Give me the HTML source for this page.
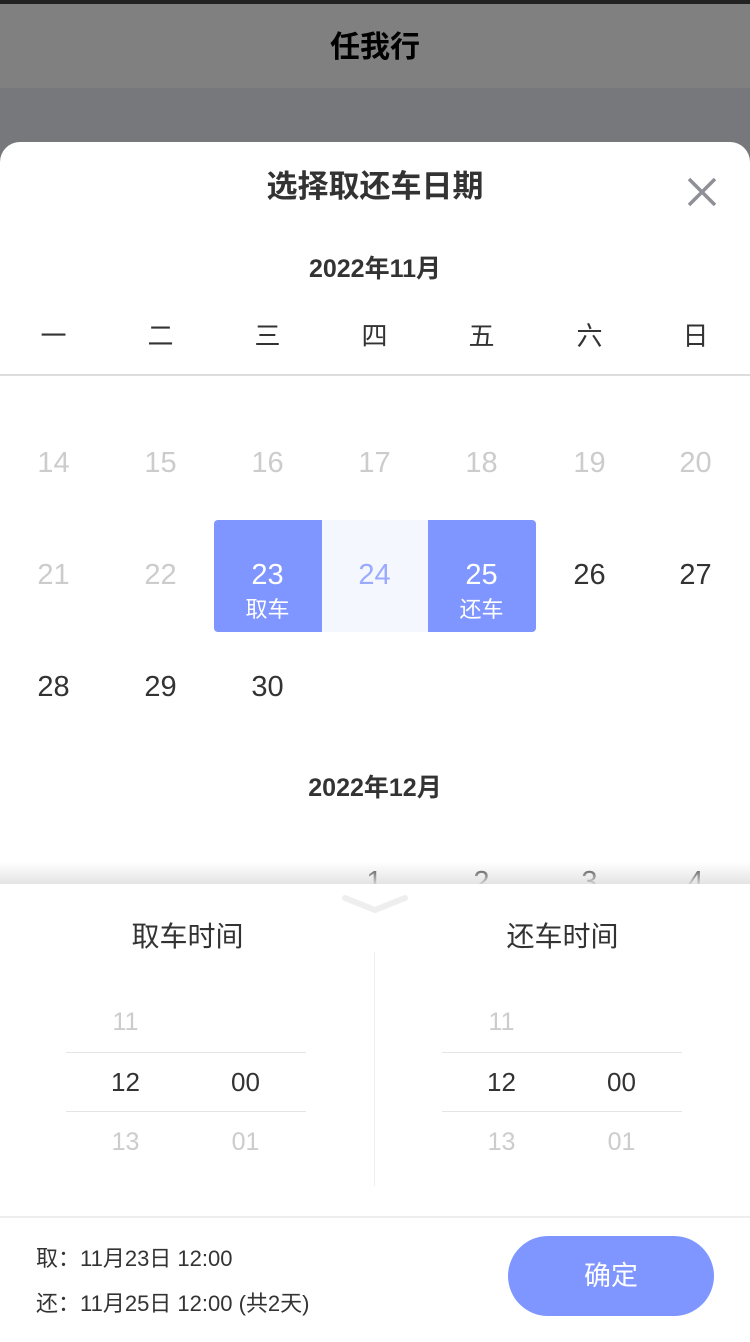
<!DOCTYPE html>
<html><head><meta charset="utf-8"><style>
*{margin:0;padding:0;box-sizing:border-box}
body{width:750px;height:1334px;overflow:hidden;position:relative;background:#fff;font-family:"Liberation Sans","Noto Sans CJK SC",sans-serif;color:#333}
.a{position:absolute}
.c{text-align:center}
.row span{position:absolute;width:107px;text-align:center;font-size:29px}
</style></head><body>
<div class="a" style="left:0;top:0;width:750px;height:4px;background:#222"></div>
<div class="a" style="left:0;top:4px;width:750px;height:84px;background:#808080"></div>
<div class="a" style="left:0;top:88px;width:750px;height:80px;background:#77787b"></div>
<div class="a c" style="left:0;top:22px;width:750px;font-size:30px;font-weight:bold;color:#000">任我行</div>
<div class="a" style="left:0;top:142px;width:750px;height:1200px;background:#fff;border-radius:20px 20px 0 0"></div>
<div class="a c" style="left:0;top:161px;width:750px;font-size:31px;font-weight:bold;color:#333">选择取还车日期</div>
<svg class="a" style="left:686px;top:176px" width="32" height="32"><path d="M3 3L29 29M29 3L3 29" stroke="#8e9096" stroke-width="3.5"/></svg>
<div class="a c" style="left:0;top:249px;width:750px;font-size:25px;font-weight:bold">2022年11月</div>
<div class="a row" style="left:0;top:316px;width:750px">
<span style="left:0;font-size:26px">一</span><span style="left:107px;font-size:26px">二</span><span style="left:214px;font-size:26px">三</span><span style="left:321px;font-size:26px">四</span><span style="left:428px;font-size:26px">五</span><span style="left:536px;font-size:26px">六</span><span style="left:642px;font-size:26px">日</span></div>
<div class="a" style="left:0;top:374px;width:750px;height:2px;background:#ddd"></div>
<div class="a row" style="top:447px;color:#ccc"><span style="left:0">14</span><span style="left:107px">15</span><span style="left:214px">16</span><span style="left:321px">17</span><span style="left:428px">18</span><span style="left:536px">19</span><span style="left:642px">20</span></div>
<div class="a" style="left:214px;top:520px;width:108px;height:112px;background:#7f95ff;border-radius:4px 0 0 4px"></div>
<div class="a" style="left:322px;top:520px;width:106px;height:112px;background:#f5f7ff"></div>
<div class="a" style="left:428px;top:520px;width:108px;height:112px;background:#7f95ff;border-radius:0 4px 4px 0"></div>
<div class="a row" style="top:559px;color:#ccc"><span style="left:0">21</span><span style="left:107px">22</span><span style="left:214px;color:#fff">23</span><span style="left:321px;color:#9aabff">24</span><span style="left:428px;color:#fff">25</span><span style="left:536px;color:#333">26</span><span style="left:642px;color:#333">27</span></div>
<div class="a row" style="top:592px;color:#fff"><span style="left:214px;font-size:22px">取车</span><span style="left:428px;font-size:22px">还车</span></div>
<div class="a row" style="top:671px"><span style="left:0">28</span><span style="left:107px">29</span><span style="left:214px">30</span></div>
<div class="a c" style="left:0;top:768px;width:750px;font-size:25px;font-weight:bold">2022年12月</div>
<div class="a row" style="top:866px"><span style="left:321px">1</span><span style="left:428px">2</span><span style="left:536px">3</span><span style="left:642px">4</span></div>
<div class="a" style="left:0;top:862px;width:750px;height:22px;background:linear-gradient(rgba(255,255,255,0),rgba(225,225,225,.9))"></div>
<div class="a" style="left:0;top:884px;width:750px;height:450px;background:#fff"></div>
<svg class="a" style="left:340px;top:892px" width="70" height="24"><path d="M5 6L35 18L65 6" stroke="#eee" stroke-width="6" fill="none" stroke-linecap="round"/></svg>
<div class="a c" style="left:0;top:915px;width:375px;font-size:28px">取车时间</div>
<div class="a c" style="left:375px;top:915px;width:375px;font-size:28px">还车时间</div>
<div class="a" style="left:374px;top:952px;width:1px;height:234px;background:#eee"></div>
<div class="a" style="left:66px;top:1052px;width:240px;height:1px;background:#e5e5e5"></div>
<div class="a" style="left:66px;top:1111px;width:240px;height:1px;background:#e5e5e5"></div>
<div class="a" style="left:442px;top:1052px;width:240px;height:1px;background:#e5e5e5"></div>
<div class="a" style="left:442px;top:1111px;width:240px;height:1px;background:#e5e5e5"></div>
<div class="a row" style="top:1008px;color:#ccc"><span style="left:72px;font-size:25px">11</span><span style="left:448px;font-size:25px">11</span></div>
<div class="a row" style="top:1067px"><span style="left:72px;font-size:26px">12</span><span style="left:192px;font-size:26px">00</span><span style="left:448px;font-size:26px">12</span><span style="left:568px;font-size:26px">00</span></div>
<div class="a row" style="top:1128px;color:#ccc"><span style="left:72px;font-size:25px">13</span><span style="left:192px;font-size:25px">01</span><span style="left:448px;font-size:25px">13</span><span style="left:568px;font-size:25px">01</span></div>
<div class="a" style="left:0;top:1216px;width:750px;height:2px;background:#eee"></div>
<div class="a" style="left:36px;top:1241px;font-size:22px">取：11月23日 12:00</div>
<div class="a" style="left:36px;top:1286px;font-size:22px">还：11月25日 12:00 (共2天)</div>
<div class="a c" style="left:508px;top:1236px;width:206px;height:80px;border-radius:40px;background:#7f95ff;color:#fff;font-size:27px;line-height:80px">确定</div>
</body></html>
